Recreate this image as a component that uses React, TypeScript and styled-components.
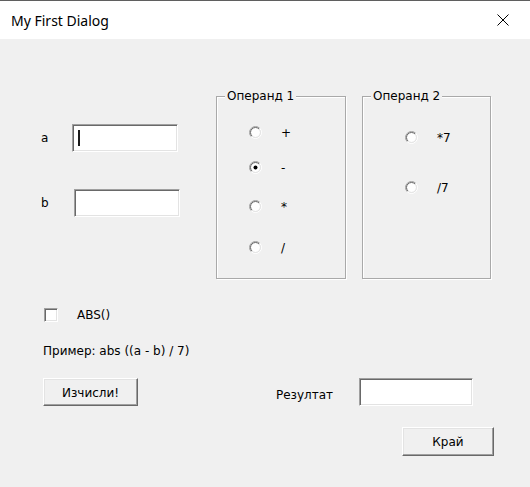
import React from "react";
import styled, { createGlobalStyle } from "styled-components";

const Global = createGlobalStyle`
  html, body { margin: 0; padding: 0; background: #f0f0f0; }
  body { font-family: "DejaVu Sans", "Liberation Sans", Arial, sans-serif; }
  * { box-sizing: border-box; }
`;

const Window = styled.div`
  width: 530px;
  height: 487px;
  border-top: 1px solid #5f5f5f;
  background: #f0f0f0;
  display: flex;
  flex-direction: column;
  overflow: hidden;
`;

const TitleBar = styled.div`
  height: 38px;
  flex: none;
  background: #ffffff;
  display: flex;
  align-items: center;
  justify-content: space-between;
  padding: 0 21px 0 11px;
`;

const Title = styled.span`
  font-family: "Noto Sans", "Open Sans", sans-serif;
  font-size: 14px;
  color: #000;
`;

const CloseIcon = styled.svg`
  width: 12px;
  height: 12px;
  display: block;
`;

const Body = styled.div`
  display: flex;
  flex-direction: column;
  font-size: 12px;
  color: #000;
`;

const TopSection = styled.div`
  display: flex;
  margin-top: 57px;
  height: 183px;
`;

const FieldsColumn = styled.div`
  width: 216px;
  display: flex;
  flex-direction: column;
  padding-top: 28px;
`;

const FieldRow = styled.div<{ $gap: number }>`
  display: flex;
  align-items: center;
  height: 28px;
  padding-left: 41px;
  margin-top: ${(p) => p.$gap}px;
`;

const FieldLabel = styled.span<{ $w: number }>`
  width: ${(p) => p.$w}px;
  line-height: 14px;
`;

const TextBox = styled.div<{ $w: number; $h: number }>`
  width: ${(p) => p.$w}px;
  height: ${(p) => p.$h}px;
  background: #ffffff;
  border: 1px solid;
  border-color: #a0a0a0 #ffffff #ffffff #a0a0a0;
  box-shadow: inset 1px 1px 0 #696969, inset -1px -1px 0 #e3e3e3;
  display: flex;
  align-items: center;
  padding-left: 5px;
`;

const Caret = styled.span`
  width: 2px;
  height: 16px;
  background: #1a1a1a;
`;

const GroupBox = styled.div<{ $w: number; $ml: number; $pl: number }>`
  position: relative;
  width: ${(p) => p.$w}px;
  height: 183px;
  margin-left: ${(p) => p.$ml}px;
  border: 1px solid #a9a9a9;
  box-shadow: inset 1px 1px 0 #ffffff, 1px 1px 0 #ffffff;
  display: flex;
  flex-direction: column;
  padding-left: ${(p) => p.$pl}px;
`;

const Legend = styled.span`
  position: absolute;
  top: -8px;
  left: 8px;
  padding: 0 2px;
  background: #f0f0f0;
  line-height: 14px;
`;

const Option = styled.div<{ $gap: number }>`
  display: flex;
  align-items: center;
  height: 13px;
  margin-top: ${(p) => p.$gap}px;
`;

const OptionLabel = styled.span`
  margin-left: 19px;
  line-height: 14px;
`;

const RadioSvg = styled.svg`
  width: 13px;
  height: 13px;
  display: block;
  flex: none;
`;

const CheckRow = styled.div`
  display: flex;
  align-items: center;
  height: 14px;
  margin-top: 29px;
  padding-left: 44px;
`;

const CheckBox = styled.span`
  width: 14px;
  height: 14px;
  flex: none;
  background: #ffffff;
  border: 1px solid;
  border-color: #a0a0a0 #ffffff #ffffff #a0a0a0;
  box-shadow: inset 1px 1px 0 #696969, inset -1px -1px 0 #e3e3e3;
`;

const CheckLabel = styled.span`
  margin-left: 19px;
  line-height: 14px;
`;

const Example = styled.div`
  margin-top: 22px;
  padding-left: 43px;
  line-height: 14px;
`;

const ButtonRow = styled.div`
  display: flex;
  align-items: center;
  margin-top: 20px;
  padding-left: 43px;
`;

const Button = styled.div<{ $w: number; $h: number }>`
  width: ${(p) => p.$w}px;
  height: ${(p) => p.$h}px;
  background: #f0f0f0;
  border: 1px solid;
  border-color: #ffffff #696969 #696969 #ffffff;
  box-shadow: inset -1px -1px 0 #a0a0a0, inset 1px 1px 0 #e3e3e3;
  display: flex;
  align-items: center;
  justify-content: center;
  padding-top: 1px;
`;

const ResultLabel = styled.span`
  margin-left: 138px;
  width: 83px;
  line-height: 14px;
  padding-top: 6px;
`;

const FooterRow = styled.div`
  display: flex;
  justify-content: flex-end;
  margin-top: 21px;
  padding-right: 36px;
`;

const Radio: React.FC<{ checked?: boolean }> = ({ checked }) => {
  const c = 6.5;
  const d1 = 6 / Math.SQRT2;
  const d2 = 5 / Math.SQRT2;
  return (
    <RadioSvg viewBox="0 0 13 13">
      <circle cx={c} cy={c} r={4.5} fill="#ffffff" />
      <path
        d={`M${c - d1} ${c + d1} A6 6 0 0 1 ${c + d1} ${c - d1}`}
        fill="none"
        stroke="#a0a0a0"
      />
      <path
        d={`M${c + d1} ${c - d1} A6 6 0 0 1 ${c - d1} ${c + d1}`}
        fill="none"
        stroke="#ffffff"
      />
      <path
        d={`M${c - d2} ${c + d2} A5 5 0 0 1 ${c + d2} ${c - d2}`}
        fill="none"
        stroke="#696969"
      />
      <path
        d={`M${c + d2} ${c - d2} A5 5 0 0 1 ${c - d2} ${c + d2}`}
        fill="none"
        stroke="#e3e3e3"
      />
      {checked && <circle cx={c} cy={c} r={2} fill="#000000" />}
    </RadioSvg>
  );
};

const ops1 = [
  { label: "+", gap: 29, checked: false },
  { label: "-", gap: 22, checked: true },
  { label: "*", gap: 26, checked: false },
  { label: "/", gap: 28, checked: false },
];

const ops2 = [
  { label: "*7", gap: 34 },
  { label: "/7", gap: 37 },
];

export default function App() {
  return (
    <>
      <Global />
      <Window>
        <TitleBar>
          <Title>My First Dialog</Title>
          <CloseIcon viewBox="0 0 12 12">
            <path d="M0.5 0.5 L11.5 11.5 M11.5 0.5 L0.5 11.5" stroke="#000" strokeWidth="1" />
          </CloseIcon>
        </TitleBar>
        <Body>
          <TopSection>
            <FieldsColumn>
              <FieldRow $gap={0}>
                <FieldLabel $w={31}>a</FieldLabel>
                <TextBox $w={106} $h={28}>
                  <Caret />
                </TextBox>
              </FieldRow>
              <FieldRow $gap={37}>
                <FieldLabel $w={33}>b</FieldLabel>
                <TextBox $w={106} $h={28} />
              </FieldRow>
            </FieldsColumn>
            <GroupBox $w={130} $ml={0} $pl={32}>
              <Legend>Операнд 1</Legend>
              {ops1.map((o) => (
                <Option key={o.label} $gap={o.gap}>
                  <Radio checked={o.checked} />
                  <OptionLabel>{o.label}</OptionLabel>
                </Option>
              ))}
            </GroupBox>
            <GroupBox $w={129} $ml={16} $pl={42}>
              <Legend>Операнд 2</Legend>
              {ops2.map((o) => (
                <Option key={o.label} $gap={o.gap}>
                  <Radio />
                  <OptionLabel>{o.label}</OptionLabel>
                </Option>
              ))}
            </GroupBox>
          </TopSection>
          <CheckRow>
            <CheckBox />
            <CheckLabel>ABS()</CheckLabel>
          </CheckRow>
          <Example>Пример: abs ((a - b) / 7)</Example>
          <ButtonRow>
            <Button $w={95} $h={28}>Изчисли!</Button>
            <ResultLabel>Резултат</ResultLabel>
            <TextBox $w={114} $h={28} />
          </ButtonRow>
          <FooterRow>
            <Button $w={92} $h={29}>Край</Button>
          </FooterRow>
        </Body>
      </Window>
    </>
  );
}
